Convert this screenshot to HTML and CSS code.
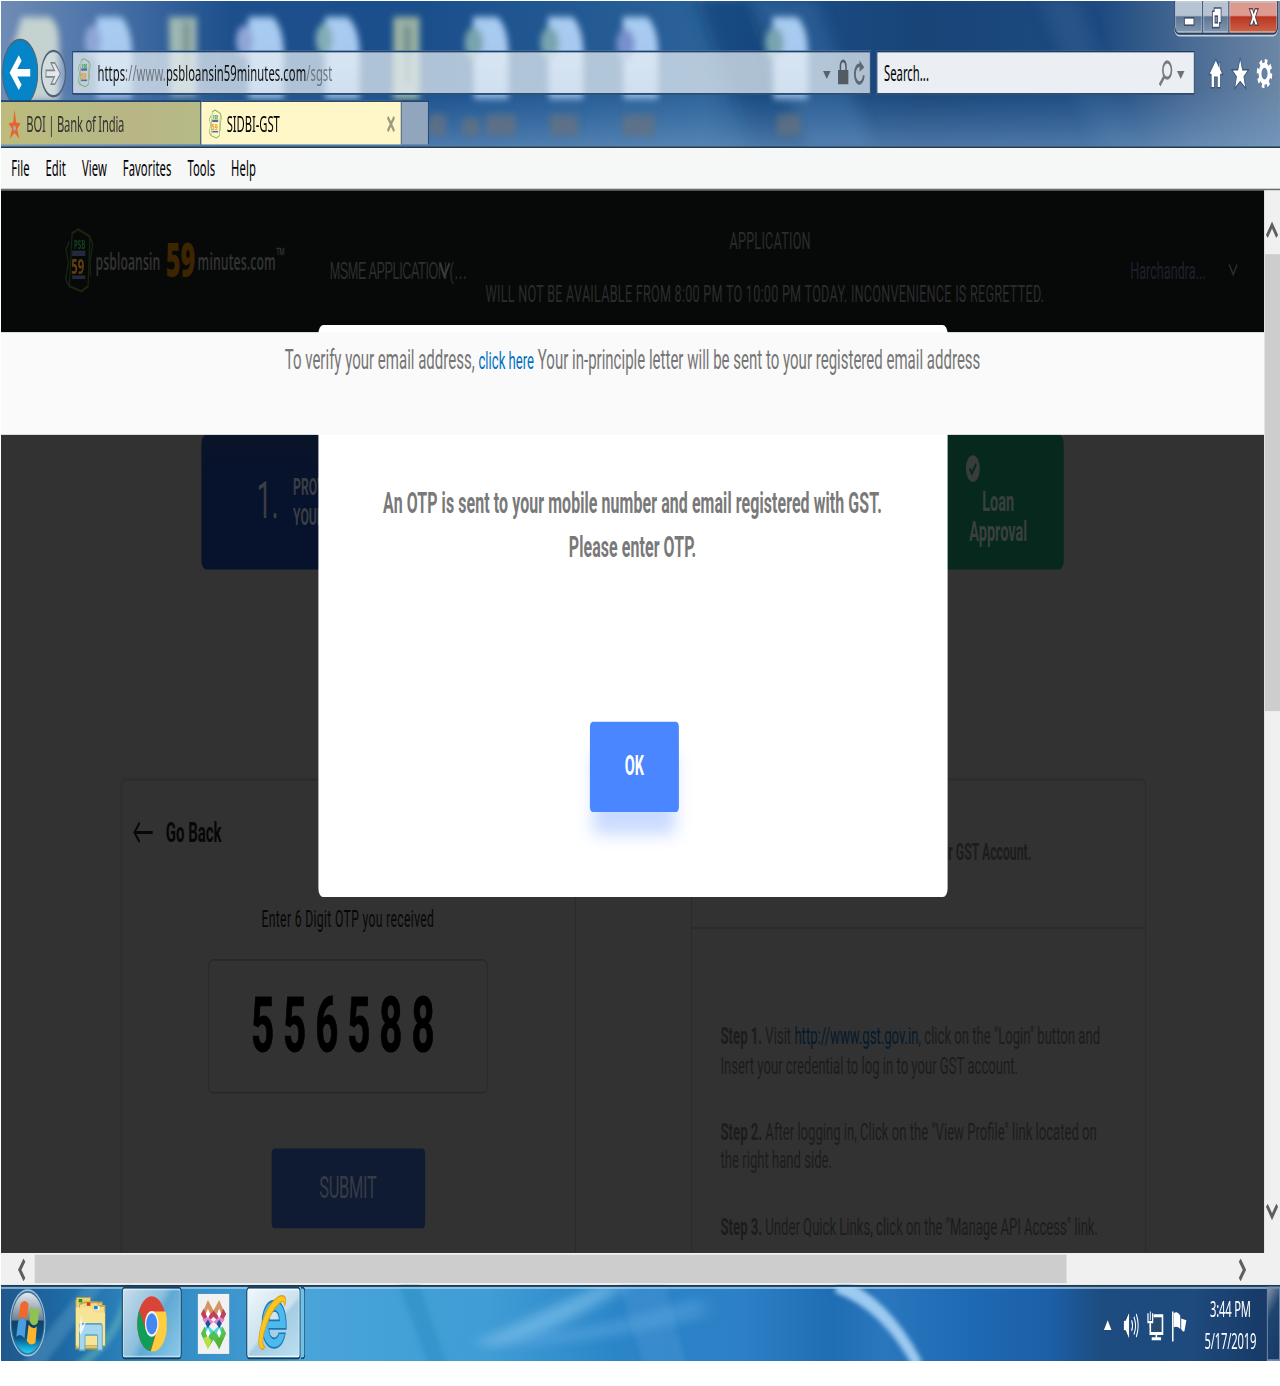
FILE: index.html
```html
<!DOCTYPE html>
<html lang="en">
<head>
<meta charset="utf-8">
<title>SIDBI-GST</title>
<link rel="stylesheet" href="styles.css">
</head>
<body>
<svg width="0" height="0" class="defs">
  <defs>
    <symbol id="notes" viewBox="0 0 31 37">
      <g fill="none" stroke="currentColor" stroke-width="1.3">
        <path d="M8 3 12 2 14 .8 27 5 25 33 18 36 5 33Z"/>
        <path d="M5 8 1.500 12 4 20 1 29 5 33M26 5 30 9 27 20 28 27"/>
      </g>
      <text x="10" y="12" font-size="6.500" class="notes-psb">PSB</text>
      <rect x="8" y="13" width="14" height="3" class="notes-bar"/>
      <text x="7" y="26" font-size="12" class="notes-59">59</text>
      <rect x="8" y="27" width="14" height="2" class="notes-bar"/>
    </symbol>
  </defs>
</svg>
<div class="screen">
<div class="desktop">
  <header class="titlebar">
    <svg class="glass" viewBox="0 0 1366 83" preserveAspectRatio="none">
      <defs>
        <linearGradient id="sky"><stop offset="0" stop-color="#6f8cb5"/><stop offset=".08" stop-color="#4a72a8"/><stop offset=".18" stop-color="#1d4f8c"/><stop offset=".33" stop-color="#1a4f8c"/><stop offset=".55" stop-color="#2b6298"/><stop offset=".61" stop-color="#1c4d84"/><stop offset=".72" stop-color="#184478"/><stop offset=".86" stop-color="#1d4a80"/><stop offset=".93" stop-color="#4a6b94"/><stop offset="1" stop-color="#6c87a5"/></linearGradient>
        <linearGradient id="haze" x2="0" y2="1"><stop offset=".6" stop-color="#6fa0cc" stop-opacity="0"/><stop offset="1" stop-color="#7fa6cf" stop-opacity=".5"/></linearGradient>
        <linearGradient id="doc" x2="0" y2="1"><stop offset="0" stop-color="#a9cdf2"/><stop offset=".5" stop-color="#a8c8ef"/><stop offset="1" stop-color="#8db3de"/></linearGradient>
        <filter id="soft" x="-20%" y="-20%" width="140%" height="140%"><feGaussianBlur stdDeviation="3.400 2.200"/></filter>
        <filter id="softer"><feGaussianBlur stdDeviation="8 2"/></filter>
      </defs>
      <rect width="1366" height="83" fill="url(#sky)"/>
      <g filter="url(#softer)">
        <path d="M800 0h70l60 83h-70z" fill="#2f6299" opacity=".7"/>
        <path d="M742 0h60l60 83h-60z" fill="#164479" opacity=".7"/>
        <path d="M1110 0h40l60 83h-40z" fill="#3b6897" opacity=".35"/>
      </g>
      <rect width="1366" height="83" fill="url(#haze)"/>
      <g filter="url(#soft)">
        <path d="M22 9h30q10 4 10 14v34H14V24z" fill="#c4d2d0"/>
        <path d="M102 9h26q12 6 12 22v25h-38z" fill="url(#doc)"/><circle cx="98" cy="23" r="9" fill="#8ea6d6"/>
        <path d="M179 9h30v45h-28z" fill="#9fb8b4"/><path d="M194 12h8v30h-8z" fill="#7c9693"/>
        <path d="M264 9h26q12 6 12 22v25h-38z" fill="url(#doc)"/><circle cx="260" cy="23" r="9" fill="#8ea6d6"/>
        <path d="M346 9h24q13 6 13 22v25h-37z" fill="url(#doc)"/><circle cx="345" cy="22" r="9" fill="#83adb5"/>
        <path d="M419 9h28v47h-28z" fill="#9db4a5"/><path d="M430 14h8v34h-8z" fill="#738f8f"/>
        <path d="M504 9h26q12 6 12 22v25h-37z" fill="url(#doc)"/><ellipse cx="505" cy="24" rx="10" ry="9" fill="#78a4ae"/>
        <path d="M584 9h26q12 6 12 22v25h-37z" fill="url(#doc)"/><ellipse cx="586" cy="24" rx="10" ry="9" fill="#78a4ae"/>
        <path d="M664 9h26q12 6 12 22v25h-37z" fill="url(#doc)"/><ellipse cx="667" cy="25" rx="10" ry="9" fill="#7891cd"/>
        <path d="M824 9h26q12 6 12 22v25h-37z" fill="url(#doc)"/><ellipse cx="826" cy="24" rx="10" ry="9" fill="#78a4ae"/>
        <g fill="#67717f" opacity=".75"><path d="M457 65h18v12h-18zM493 67h18v10h-18zM518 65h32v12h-32zM586 65h30v12h-30zM664 65h34v12h-34zM829 65h25v12h-25z"/></g>
        <path d="M180 60h50v17h-50z" fill="#6d7f93"/>
      </g>
    </svg>
    <div class="win-buttons">
      <span class="wb wb-min"><svg viewBox="0 0 14 14"><rect x="1.500" y="7" width="11" height="4.500" fill="#fff" stroke="#45506b"/></svg></span>
      <span class="wb wb-max"><svg viewBox="0 0 14 14"><path d="M4.500 1h8v9h-2v3h-8V3h2z" fill="#fff" stroke="#45506b"/><rect x="5.500" y="6" width="3" height="4" fill="#8296b3" stroke="#45506b"/></svg></span>
      <span class="wb wb-close"><svg viewBox="0 0 14 14"><path d="M2 1.500h3.500L7 4l1.500-2.500H12L9 6.500l3 5H8.500L7 9l-1.500 2.500H2l3-5z" fill="#fff" stroke="#5a4450"/></svg></span>
    </div>
    <div class="navbar">
      <svg class="back" viewBox="0 0 40 40"><circle cx="20" cy="20" r="19.300" fill="#0684c8" stroke="#4f6373"/><path d="M31 20H13M20 11.500 11.500 20 20 28.500" fill="none" stroke="#fff" stroke-width="4.400"/></svg>
      <svg class="forward" viewBox="0 0 28 28"><circle cx="14" cy="14" r="12.800" fill="#fff" fill-opacity=".25" stroke="#51627c" stroke-width="1.300"/><path d="M6 12.200h9L11.500 8h4l6 6-6 6h-4l3.500-4.200H6z" fill="#e3e7ea" stroke="#7b8792"/></svg>
      <div class="address">
        <svg class="fav"><use href="#notes"/></svg>
        <span class="url"><b>https</b>://www.<b>psbloansin59minutes.com</b>/sgst</span>
        <svg class="addr-icons" viewBox="0 0 50 18"><path d="M2 7.500h8L6 12z" fill="#58626d"/><path d="M18 7h11v8H18z" fill="#525b64"/><path d="M20.500 7V5a3 3.200 0 0 1 6 0V7" fill="none" stroke="#525b64" stroke-width="1.600"/><path d="M43.500 5.200A4.800 5 0 1 0 45.500 10" fill="none" stroke="#5e6872" stroke-width="2"/><path d="M41 1.500 46 5.500 41 8z" fill="#5e6872"/></svg>
      </div>
      <div class="search">
        <span class="search-text">Search...</span>
        <svg class="search-icon" viewBox="0 0 30 16"><circle cx="9.500" cy="6" r="4.600" fill="none" stroke="#777b80" stroke-width="1.800"/><path d="M6.500 9.500 1.500 14.500" stroke="#777b80" stroke-width="2.200"/><path d="M20 6.500h8l-4 4.500z" fill="#6d7277"/></svg>
      </div>
      <svg class="tools" viewBox="0 0 68 18"><g fill="#fff" stroke="#3b5577" stroke-width=".8"><path d="M7.500 1 0 9.500H2.500V17H6V11H9V17H12.500V9.500H15L12.500 6.500V2.500H11V5z"/><path d="m33.500 0 2.500 6.800h6.500l-5 4 2 6.700-6-4-6 4 2-6.700-5-4H31z"/></g><circle cx="59.500" cy="9" r="4.800" fill="none" stroke="#fff" stroke-width="3"/><circle cx="59.500" cy="9" r="7" fill="none" stroke="#fff" stroke-width="2.600" stroke-dasharray="2.750 2.750"/></svg>
    </div>
    <div class="tabs">
      <div class="tab tab-idle"><svg class="star" viewBox="0 0 14 18"><path d="M7 0 8.700 8 14 8.500 10 12 12.500 18 7 14.500 1.500 18 4 12 0 8.500 5.300 8z" fill="#e8642c"/><circle cx="7" cy="11.500" r="1.600" fill="#a9a9b0"/></svg><span class="tab-a">BOI | Bank of India</span></div>
      <div class="tab tab-active"><svg class="fav"><use href="#notes"/></svg><span class="tab-b">SIDBI-GST</span><svg class="tab-x" viewBox="0 0 9 9"><path d="M1 .5 8 8.500M8 .5 1 8.500" stroke="#9d9a80" stroke-width="2"/></svg></div>
      <div class="tab-new"></div>
    </div>
  </header>
  <nav class="menubar"><span>File</span><span>Edit</span><span>View</span><span>Favorites</span><span>Tools</span><span>Help</span></nav>

  <div class="viewport">
    <main class="page">
      <header class="site-head">
        <div class="logo">
          <svg class="logo-notes"><use href="#notes"/></svg>
          <span class="logo-a">psbloansin</span><span class="logo-59">59</span><span class="logo-b">minutes.com</span><span class="logo-tm">™</span>
        </div>
        <div class="msme">MSME APPLICATION<svg class="msme-v" viewBox="0 0 12 10"><path d="M1 1 5.500 8.500 11 1" fill="none" stroke="#3a3a3b" stroke-width="1.800"/></svg><span>(...</span></div>
        <div class="alert"><span class="alert-a">APPLICATION</span><span class="alert-b">WILL NOT BE AVAILABLE FROM 8:00 PM TO 10:00 PM TODAY. INCONVENIENCE IS REGRETTED.</span></div>
        <div class="user">Harchandra...</div>
        <svg class="user-v" viewBox="0 0 10 8"><path d="M.8.8 5 6.500 9.200.8" fill="none" stroke="#2b2b2c" stroke-width="1.400"/></svg>
      </header>
      <div class="notice"><span class="n1">To verify your email address,</span> <a>click here</a> <span class="n2">Your in-principle letter will be sent to your registered email address</span></div>
      <section class="content">
        <div class="steps">
          <div class="step-one"><span class="num">1.</span><span class="prov">PROVIDE<br>YOUR GST</span></div>
          <div class="step-end">
            <svg class="tick" viewBox="0 0 16 16"><circle cx="8" cy="8" r="7.500" fill="#373d3a"/><path d="m4.500 8 2.500 2.700L11.500 5.500" fill="none" stroke="#08271d" stroke-width="1.800"/></svg>
            <div class="loan">Loan<br>Approval</div>
          </div>
        </div>
        <div class="cards">
          <div class="card otp-card">
            <div class="go-back"><svg viewBox="0 0 22 13"><path d="M21 6.500H1.500M7 1 1.500 6.500 7 12" fill="none" stroke="#080808" stroke-width="1.700"/></svg><span>Go Back</span></div>
            <div class="otp-label">Enter 6 Digit OTP you received</div>
            <div class="otp-box">556588</div>
            <div class="submit">SUBMIT</div>
          </div>
          <div class="card guide-card">
            <div class="guide-head">your GST Account.</div>
            <div class="guide-body">
              <p class="g1"><b>Step 1.</b> Visit <a>http://www.gst.gov.in</a>, click on the "Login" button and</p>
              <p class="g2">Insert your credential to log in to your GST account.</p>
              <p class="g3"><b>Step 2.</b> After logging in, Click on the "View Profile" link located on</p>
              <p class="g4">the right hand side.</p>
              <p class="g5"><b>Step 3.</b> Under Quick Links, click on the "Manage API Access" link.</p>
            </div>
          </div>
        </div>
      </section>
      <div class="modal">
        <p class="modal-a">An OTP is sent to your mobile number and email registered with GST.</p>
        <p class="modal-b">Please enter OTP.</p>
        <div class="ok">OK</div>
      </div>
    </main>
    <div class="vscroll">
      <svg class="up" viewBox="0 0 13 10"><path d="M1 9 6.500 2.500 12 9" fill="none" stroke="#5f5f5f" stroke-width="2.600"/></svg>
      <div class="vthumb"></div>
      <svg class="down" viewBox="0 0 13 10"><path d="M1 1 6.500 7.500 12 1" fill="none" stroke="#5f5f5f" stroke-width="2.600"/></svg>
    </div>
  </div>
  <div class="hscroll">
    <svg class="left" viewBox="0 0 10 13"><path d="M8 1 3 6.500 8 12" fill="none" stroke="#5f5f5f" stroke-width="2.700"/></svg>
    <div class="hthumb"></div>
    <svg class="right" viewBox="0 0 10 13"><path d="M2 1 7 6.500 2 12" fill="none" stroke="#5f5f5f" stroke-width="2.700"/></svg>
  </div>

  <footer class="taskbar">
    <svg class="glass" viewBox="0 0 1366 43" preserveAspectRatio="none">
      <defs>
        <linearGradient id="bar"><stop offset="0" stop-color="#20588c"/><stop offset=".05" stop-color="#1e6aa5"/><stop offset=".1" stop-color="#2c83bd"/><stop offset=".24" stop-color="#48a4d9"/><stop offset=".38" stop-color="#409dd5"/><stop offset=".48" stop-color="#2b86c8"/><stop offset=".58" stop-color="#2d80c6"/><stop offset=".65" stop-color="#1f6db2"/><stop offset=".69" stop-color="#2b77be"/><stop offset=".75" stop-color="#1f6bb4"/><stop offset=".82" stop-color="#1c5fa8"/><stop offset=".86" stop-color="#1d4c80"/><stop offset=".93" stop-color="#1e4a7d"/><stop offset="1" stop-color="#163763"/></linearGradient>
        <filter id="glow"><feGaussianBlur stdDeviation="3 1.200"/></filter>
        <filter id="wide"><feGaussianBlur stdDeviation="10 2.500"/></filter>
      </defs>
      <rect width="1366" height="43" fill="url(#bar)"/>
      <g filter="url(#glow)">
        <path d="M20 46 90 0h20L45 46z" fill="#5295c2" opacity=".5"/>
        <path d="M90 46Q135 28 140 0h-7Q125 28 75 46z" fill="#69bcb8" opacity=".5"/>
        <path d="M425 0h22l30 46h-20z" fill="#2f8fc4" opacity=".6"/>
        <path d="M660 0h50l22 46h-45z" fill="#4c97d6" opacity=".35"/>
        <path d="M892 0Q945 10 980 46" fill="none" stroke="#9ccaf0" stroke-width="9"/>
      </g>
      <g filter="url(#wide)">
        <path d="M510 32 640 0h28Q600 26 520 36z" fill="#7cbfea" opacity=".7"/>
        <path d="M520 30Q640 26 750 6v12Q640 34 520 36z" fill="#5fa9df" opacity=".45"/>
      </g>
      <rect width="1366" height="1.200" fill="#1d3a52"/><rect y="1.200" width="1366" height="1" fill="#b7dcf4" opacity=".75"/>
    </svg>
    <svg class="orb" viewBox="0 0 40 40">
      <defs><linearGradient id="orbfill" x2="0" y2="1"><stop offset="0" stop-color="#e4e9ee"/><stop offset=".45" stop-color="#6c8093"/><stop offset=".47" stop-color="#123f64"/><stop offset=".75" stop-color="#0a5587"/><stop offset="1" stop-color="#18d6ff"/></linearGradient></defs>
      <circle cx="20" cy="20" r="19" fill="#3f6f96" stroke="#9cc5e2" stroke-width="1"/><circle cx="20" cy="20" r="17.500" fill="url(#orbfill)"/>
      <path d="M12 9q5-3.500 9 0l-2 9q-4-3-9 0z" fill="#f0682c"/><path d="M23 10q5 3.500 10 1l-2 9q-5 3-9-1z" fill="#8fc251"/><path d="M9.500 19q5-3 9 0l-2 10q-4-3.500-9-1z" fill="#4a9ee0"/><path d="M21 21q5 3.500 9 1l-1.500 9.500q-5 2.500-9.500-1z" fill="#fcb62e"/>
    </svg>
    <svg class="folder" viewBox="0 0 36 32">
      <path d="M3 0h15v3h13v27H2V2z" fill="#e9d27a" stroke="#b79b45"/><path d="M12 3h14l1 2h7v23H6V4z" fill="#f2db86" stroke="#c0a650"/><path d="M2 6h18l2 3h12v19H2z" fill="#f7e597"/>
      <rect x="5" y="1" width="4" height="2" fill="#159a1b"/><rect x="14" y="3" width="4" height="2" fill="#d8391c"/><rect x="22" y="5" width="6" height="2.500" fill="#fff"/><rect x="22" y="5" width="4" height="2" fill="#1c83dc"/>
      <path d="M6 31V17q0-1.500 2-1.500h21q2 0 2 1.500v14h-5v-8q0-1-1-1H13q-1 0-1 1v8z" fill="#a5d8ef" stroke="#5ba3c7"/><path d="M5.500 19 8 10l1 7 5-4-4 6-3 3z" fill="#fff" opacity=".8"/>
    </svg>
    <div class="task task-chrome">
      <svg class="chrome" viewBox="0 0 32 32"><circle cx="16" cy="16" r="15.500" fill="#da4437"/><path d="M2.600 8.200A15.500 15.500 0 0 0 14.500 31.400L21.500 19 16 16 9.500 19.500z" fill="#109d58"/><path d="M30.800 9H16l6 10-7 12.500A15.500 15.500 0 0 0 30.800 9z" fill="#fecd40"/><circle cx="16" cy="16" r="7.300" fill="#f4f4f4"/><circle cx="16" cy="16" r="5.900" fill="#4587f2"/></svg>
    </div>
    <svg class="mosaic" viewBox="0 0 34 34">
      <rect width="34" height="34" fill="#f1f1f2"/>
      <path d="m11 3.500 4 4 2 2 2-2 4-4 4 5 2 4-6 3-6-4-6 4-6-3 2-4z" fill="#d29563"/>
      <path d="m3.500 11.500 3-3 4.500 5 6-4 6 4 4.500-5 3 3L27 15l-4 1-6-3-6 3-4-1z" fill="#bf3f5c"/>
      <path d="m5 14.500 6-1.500 6 3 6-3 6 1.500-6 4-6-2.500-6 2.500z" fill="#dc86cf"/>
      <path d="m6 20 5-2 6 3 6-3 5 2-5 5-6-3-6 3z" fill="#4fd8dc"/>
      <path d="m3.500 22.500 4-4 3.500 6 6-3.500 6 3.500 3.500-6 4 4-3.500 4-4 4.500-6-5-6 5-4-4.500z" fill="#55bf4e"/>
      <path d="m6 25 5-1 4 2.500L11 31.500z" fill="#b9e03f"/><path d="m28 25-5-1-4 2.500 4 5z" fill="#57b23b"/>
      <g fill="#fff"><path d="m11 8.500 2.300 2.800L11 14l-2.300-2.700zM23 8.500l2.300 2.800L23 14l-2.300-2.700zM11 19.500l2.300 2.500L11 25l-2.300-3zM23 19.500l2.300 2.500L23 25l-2.300-3z"/></g><path d="m11 14.500 2.800 2.500L11 19.500 8.200 17zM23 14.500l2.800 2.500L23 19.500 20.200 17z" fill="#214f93"/>
    </svg>
    <div class="task task-ie">
      <svg class="ie" viewBox="0 0 34 34"><path d="M18.500 4C10 4 5 10 5 18s5 13.500 13 13.500c6 0 10.500-3 12.500-8.500h-7c-1 2-3 3-5 3-3.500 0-6-2-6-5.500h19C32 10 27 4 18.500 4zm-6 11.500c.5-3.500 2.700-5.500 6-5.500s5.200 2 5.500 5.500z" fill="#4db9ec" stroke="#1776b8"/><path d="M6 32.500Q-1 32 2.500 22 8 8 21 2.500 29-.500 31 3q.5 2-1 4-1-4-6-1.500Q13 11 7 23q-3 7 1 8z" fill="#fbc620" stroke="#d79c12" stroke-width=".7"/></svg>
    </div>
    <div class="task-stack"></div>
    <div class="tray">
      <svg class="tray-icons" viewBox="0 0 90 20">
        <path d="m1 12.500 4-5.500 4 5.500z" fill="#fff"/>
        <g stroke="#14304f" stroke-width=".6"><path d="M22 7h2l4-5v16l-4-5h-2z" fill="#fff"/></g><path d="M30.500 7q2 3 0 6M33 5q3.500 5 0 10M35.500 3.500q4 6.500 0 13" fill="none" stroke="#fff" stroke-width="1.100"/>
        <path d="M54 4.500h9.500v10H50.500V9" fill="#274a70" stroke="#fff" stroke-width="1.700"/><path d="M52 17.500h10M57 14v3" stroke="#fff" stroke-width="1.700"/><path d="M48 3v5h5V3M50.500 8v3" fill="none" stroke="#fff" stroke-width="1.300"/><path d="M50.500 2v5" stroke="#fff" stroke-width="1"/>
        <path d="M74.500 2v17" stroke="#fff" stroke-width="1.600"/><path d="M75.500 3q4-1.500 7 1.500V12q-3-2-7-1z" fill="#fff"/><path d="M83.500 6 89 7l-2 6q-2 1-3.500-1z" fill="#fff"/>
      </svg>
      <div class="clock"><span class="time">3:44 PM</span><span class="date">5/17/2019</span></div>
      <div class="peek"></div>
    </div>
  </footer>
</div>
</div>
</body>
</html>
```

FILE: styles.css
```css
html { overflow: hidden; background: #fff; }
body { margin: 0; width: 1280px; height: 1386px; overflow: hidden; background: #fff; font-family: Roboto, "Liberation Sans", sans-serif; }
p { margin: 0; }
svg { display: block; flex: none; overflow: hidden; }
span, p, a { white-space: nowrap; }
.defs { position: absolute; }

/* A 1366 x 768 desktop, stretched to the output size */
.screen { width: 1280px; height: 1362px; overflow: hidden; box-sizing: border-box; padding: 1px 0 0 1px; }
.desktop { width: 1366px; height: 768px; display: flex; flex-direction: column; transform-origin: 0 0; transform: scale(.9363, 1.77083); overflow: hidden; }

/* Title bar */
.titlebar { height: 83px; flex: none; position: relative; box-sizing: border-box; border-bottom: 1px solid #1c3751; box-shadow: inset 0 -1px #a9c0d8; display: flex; flex-direction: column; isolation: isolate; }
.glass { position: absolute; inset: 0; width: 100%; height: 100%; z-index: -1; }
.win-buttons { display: flex; flex: none; align-self: flex-end; width: 111px; height: 19px; margin-right: 2px; box-sizing: border-box; border: 1px solid #2b3e58; border-top: 0; border-radius: 0 0 5px 5px; overflow: hidden; box-shadow: 0 1px #c4d2df; }
.wb { display: flex; align-items: center; justify-content: center; background: linear-gradient(#b6c3d2 45%, #5d7695 50%, #8499b1); box-shadow: inset 0 0 0 1px #c8d3df88; }
.wb svg { width: 14px; height: 13px; }
.wb-min { width: 29px; border-right: 1px solid #40536d; }
.wb-max { width: 27px; border-right: 1px solid #40536d; }
.wb-close { flex: 1; background: linear-gradient(#dd9a8e 45%, #b93523 50%, #cf6547); }
.navbar { display: flex; align-items: center; flex: none; height: 37px; box-sizing: border-box; padding: 6px 0 0 1px; }
.back { width: 39px; height: 39px; margin-left: 0; }
.forward { width: 28px; height: 28px; margin-left: 2px; }
.address { display: flex; align-items: center; width: 853px; height: 25px; margin-left: 6px; border: 1px solid #1e436f; background: #e9f0f4b8; box-sizing: border-box; }
.fav { width: 14px; height: 17px; color: #7cad57; }
.address .fav { margin-left: 5px; }
.notes-psb { font-family: "Open Sans", sans-serif; font-weight: 700; fill: #2d9d50; }
.notes-bar { fill: #5a6a9a; }
.notes-59 { font-family: "Open Sans", sans-serif; font-weight: 700; fill: #f39a1c; }
.url { margin-left: 7px; width: 260px; font: 12px "Noto Sans", sans-serif; letter-spacing: .06px; color: #6f7780; }
.url b { font-weight: 400; color: #111; }
.addr-icons { width: 50px; height: 18px; margin-left: auto; margin-right: 2px; }
.search { display: flex; align-items: center; justify-content: space-between; width: 340px; height: 25px; margin-left: 6px; box-sizing: border-box; border: 1px solid #1b3c66; background: #ebeff4; }
.search-text { padding-left: 7px; font: 12px "Noto Sans", sans-serif; letter-spacing: .05px; color: #000; }
.search-icon { width: 30px; height: 16px; margin-right: 8px; }
.tools { width: 68px; height: 18px; margin-left: 15px; }
.tabs { display: flex; flex: none; height: 25px; margin-bottom: 1px; font: 12px "Noto Sans", sans-serif; }
.tab { display: flex; align-items: center; width: 214px; box-sizing: border-box; border-right: 1px solid #1e436f; border-top: 1px solid #1e436f; }
.tab-idle { background: linear-gradient(90deg, #bdbb7c, #b7ba85 40%, #b9b585 70%, #b5bb86); color: #333; }
.tab-active { background: #fff7c7; width: 214px; }
.star { width: 13px; height: 17px; margin-left: 8px; }
.tab-a { margin-left: 6px; letter-spacing: -.22px; }
.tab-active .fav { margin-left: 8px; }
.tab-b { margin-left: 5px; letter-spacing: -.05px; color: #000; }
.tab-x { width: 9px; height: 9px; margin-left: auto; margin-right: 6px; }
.tab-new { width: 28px; background: #91a5bd; border: 1px solid #1e436f; border-left: 0; border-bottom: 0; }

.menubar { display: flex; align-items: center; flex: none; height: 24px; box-sizing: border-box; padding: 0 0 0 11px; gap: 17px; background: #f6f7f7; border-bottom: 1px solid #6b6d6c; font: 12px "Noto Sans", sans-serif; letter-spacing: .09px; color: #000; }

/* Web page */
.viewport { display: flex; flex: none; height: 600px; }
.page { position: relative; width: 1349px; height: 600px; overflow: hidden; background: #323232; display: flex; flex-direction: column; isolation: isolate; }
.site-head { display: flex; align-items: flex-start; flex: none; height: 80px; background: #070908; color: #2d2e2f; font-size: 13.500px; }
.logo { display: flex; align-items: center; width: 283px; height: 37px; padding: 21px 0 0 68px; font-family: "Open Sans", sans-serif; font-weight: 600; font-size: 13px; color: #343434; }
.logo-notes { width: 31px; height: 37px; color: #3b5c26; filter: brightness(.4); }
.logo-a { width: 70px; margin-left: 2px; letter-spacing: .1px; }
.logo-59 { width: 31px; margin-left: 5px; font-size: 27px; font-weight: 800; line-height: 36px; margin-top: -2px; letter-spacing: -.2px; color: #3f2402; }
.logo-b { width: 84px; margin-left: 3px; letter-spacing: .15px; }
.logo-tm { font-size: 12px; margin-top: -7px; }
.msme { display: flex; align-items: center; height: 16px; margin-top: 37px; width: 147px; font-family: "Liberation Sans", sans-serif; letter-spacing: -.42px; }
.msme-v { width: 12px; height: 10px; margin-left: -8px; }
.msme span { margin-left: -1px; letter-spacing: .8px; }
.alert { display: flex; flex-direction: column; align-items: center; width: 636px; height: 60px; margin-top: 20px; line-height: 16px; gap: 14px; font-size: 13.500px; color: #2b2c2d; }
.alert-a { padding-left: 11px; letter-spacing: .25px; }
.alert-b { letter-spacing: .26px; }
.user { width: 90px; margin-top: 37px; margin-left: 72px; line-height: 17px; color: #1f2030; font-size: 13.500px; }
.user-v { width: 10px; height: 8px; margin: 41px 0 0 15px; }
.notice { position: relative; z-index: 3; flex: none; height: 58px; background: #fafafa; text-align: center; font-size: 16px; line-height: 32px; color: #757575; letter-spacing: .02px; }
.notice a { font-size: 14px; color: #0072c4; }
.content { display: flex; flex-direction: column; height: 462px; }
.steps { display: flex; justify-content: space-between; width: 921px; height: 76px; margin-left: 214px; }
.step-one { display: flex; align-items: center; width: 300px; border-radius: 5px; background: linear-gradient(#0a1428, #07122c 35%); color: #3b3e44; }
.num { margin-left: 59px; font-size: 29px; letter-spacing: -.5px; margin-top: -2px; }
.prov { margin-left: 16px; font-size: 13px; font-weight: 700; line-height: 17px; margin-top: -1px; }
.step-end { display: flex; flex-direction: column; width: 300px; border-radius: 5px; background: #06281d; color: #3a403d; }
.tick { width: 16px; height: 16px; margin: 11px 0 0 195px; }
.loan { width: 80px; margin: 3px 0 0 190px; text-align: center; font-size: 15.500px; font-weight: 700; line-height: 17px; }
.cards { display: flex; justify-content: space-between; width: 1095px; height: 268px; margin: 117.500px 0 0 127.500px; }
.card { width: 486px; height: 280px; box-sizing: border-box; border: 1px solid #2b2b2b; border-radius: 5px; display: flex; flex-direction: column; }
.otp-card { align-items: center; color: #070707; }
.go-back { display: flex; align-self: stretch; align-items: center; height: 20px; margin: 19.500px 0 0 12px; font-size: 16px; font-weight: 700; }
.go-back svg { width: 22px; height: 13px; margin-right: 13.500px; margin-top: 1px; }
.otp-label { margin-top: 32px; line-height: 16px; font-size: 13px; letter-spacing: .36px; }
.otp-box { width: 299px; height: 76px; margin-top: 14px; box-sizing: border-box; border: 1px solid #292929; border-radius: 5px; padding-left: 45px; font-size: 43px; font-weight: 700; line-height: 73px; letter-spacing: 9.600px; color: #000; -webkit-text-stroke: .6px #000; }
.submit { width: 164px; height: 45px; margin-top: 30.500px; border-radius: 3px; background: #0f1b33; color: #373b43; text-align: center; line-height: 44px; font-size: 17.500px; font-weight: 400; letter-spacing: -.3px; }
.guide-card { color: #1c1c1c; }
.guide-head { height: 84px; box-sizing: border-box; padding: 33.500px 0 0 253px; font-size: 13px; line-height: 16px; font-weight: 700; letter-spacing: .04px; border-bottom: 1px solid #2b2b2b; }
.guide-body { padding: 52.500px 0 0 31px; font-size: 14px; line-height: 17px; }
.guide-body a { color: #05192b; }
.g3 { margin-top: 20px; }
.g5 { margin-top: 20.500px; }
.g4 { margin-top: -1px; }

/* Dialog over the page */
.modal { position: absolute; left: 338.500px; top: 75.500px; z-index: 2; width: 672px; height: 323px; border-radius: 5px; background: #fff; color: #797979; text-align: center; font-size: 17px; font-weight: 700; line-height: 25.500px; letter-spacing: .1px; }
.modal-a { padding-top: 88px; }
.ok { width: 95px; height: 51px; margin: 85px 0 0 290.500px; border-radius: 3px; background: #4a86ff; box-shadow: 0 16px 12px -3px #4a86ff4d; color: #fff; font-size: 15.500px; font-weight: 700; line-height: 51px; }

.vscroll { width: 17px; background: #f0f0f0; display: flex; flex-direction: column; }
.up, .down { width: 13px; height: 10px; margin-left: 2px; }
.up { margin-top: 17px; }
.vthumb { height: 258px; margin: 9px 0 0 1px; background: #cdcdcd; }
.down { margin-top: 278px; }
.hscroll { display: flex; align-items: center; flex: none; height: 18px; background: #f0f0f0; }
.left { width: 10px; height: 13px; margin-left: 17px; }
.hthumb { width: 1102px; height: 16px; margin-left: 9px; background: #cdcdcd; }
.right { width: 10px; height: 13px; margin-left: 183px; }

/* Taskbar */
.taskbar { position: relative; display: flex; align-items: center; flex: none; height: 43px; isolation: isolate; }
.orb { width: 39px; height: 39px; margin-left: 9px; }
.folder { width: 35px; height: 31px; margin-left: 30px; margin-top: 2px; }
.task { display: flex; align-items: center; justify-content: center; align-self: flex-start; margin-top: 1px; height: 41px; box-sizing: border-box; border: 1px solid #16405f; border-radius: 3px; }
.task-chrome { width: 64px; margin-left: 16px; background: linear-gradient(135deg, #c9deeb, #8dbfdc 45%, #5fa9d3 55%, #8ccbe9); box-shadow: inset 0 0 0 1px #ffffff80; }
.chrome { width: 32px; height: 32px; }
.mosaic { width: 34px; height: 34px; margin-left: 17px; }
.task-ie { width: 58px; margin-left: 18px; background: linear-gradient(150deg, #f2f8fb, #cae1ee 50%, #a5cce2 55%, #bde0f1); box-shadow: inset 0 0 0 1px #fffc; }
.ie { width: 33px; height: 33px; margin-right: 2px; }
.task-stack { align-self: flex-start; margin-top: 1px; width: 4px; height: 39px; border: 1px solid #16405f; border-left: 0; border-radius: 0 3px 3px 0; background: #73bfe5; }
.tray { display: flex; align-items: center; margin-left: auto; height: 43px; color: #fff; }
.tray-icons { width: 90px; height: 20px; margin-top: 3px; }
.clock { display: flex; flex-direction: column; align-items: center; width: 60px; margin: 3.500px 9px 0 16px; font: 12px/18px "Noto Sans", sans-serif; letter-spacing: -.2px; }
.peek { align-self: flex-start; width: 12px; height: 40px; margin-top: 1px; border: 1px solid #7590ad; background: linear-gradient(135deg, #8795ab, #20456f 35%, #173a68); }
```
